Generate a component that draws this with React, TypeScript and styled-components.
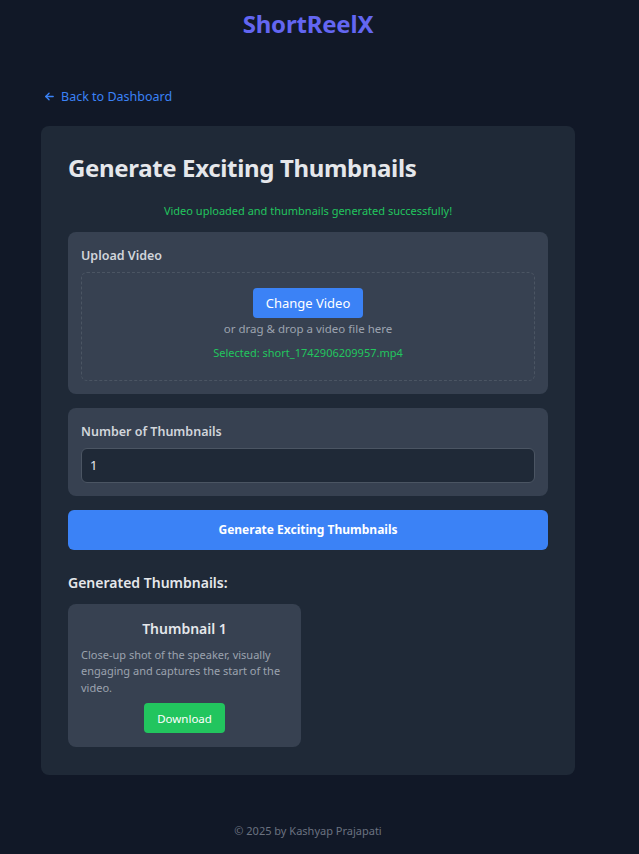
import React from "react";
import styled, { createGlobalStyle } from "styled-components";

const Global = createGlobalStyle`
  html, body { margin: 0; padding: 0; background: #111827; }
  body { font-family: "Noto Sans", "Open Sans", sans-serif; color: #e5e7eb; }
  * { box-sizing: border-box; }
`;

const Page = styled.div`
  width: 616px;
  min-height: 854px;
  background: #111827;
  display: flex;
  flex-direction: column;
`;

const Header = styled.header`
  display: flex;
  justify-content: center;
  padding-top: 8px;
  height: 52px;
`;

const Brand = styled.h1`
  margin: 0;
  font-size: 24px;
  line-height: 32px;
  font-weight: 700;
  color: #6366f1;
  letter-spacing: -0.2px;
`;

const Main = styled.main`
  padding: 33px 41px 0 41px;
  flex: 1;
`;

const BackLink = styled.a`
  display: inline-flex;
  align-items: center;
  gap: 6px;
  color: #3b82f6;
  font-size: 12.5px;
  line-height: 20px;
  text-decoration: none;
  margin-left: 3px;
  margin-bottom: 19px;
`;

const Card = styled.section`
  width: 534px;
  background: #1f2937;
  border-radius: 8px;
  padding: 27px 27px 28px 27px;
  display: flex;
  flex-direction: column;
`;

const Title = styled.h2`
  margin: 0;
  font-size: 24px;
  line-height: 30px;
  font-weight: 700;
  letter-spacing: -0.35px;
  color: #e5e7eb;
`;

const Success = styled.p`
  margin: 20px 0 13px;
  text-align: center;
  font-size: 11px;
  line-height: 16px;
  color: #22c55e;
`;

const Panel = styled.div`
  background: #374151;
  border-radius: 8px;
  padding: 14px 13px 13px;
  margin-bottom: 14px;
`;

const Label = styled.div`
  font-size: 12.5px;
  font-weight: 600;
  line-height: 20px;
  color: #d1d5db;
  margin-bottom: 6px;
`;

const Drop = styled.div`
  border: 1px dashed #4b5563;
  border-radius: 6px;
  height: 109px;
  display: flex;
  flex-direction: column;
  align-items: center;
  padding-top: 15px;
`;

const Button = styled.button<{ $tone: "blue" | "green"; $small?: boolean }>`
  border: none;
  cursor: pointer;
  font-family: inherit;
  color: #fff;
  background: ${(p) => (p.$tone === "blue" ? "#3b82f6" : "#22c55e")};
  border-radius: 4px;
  font-size: ${(p) => (p.$small ? "11.5px" : "13px")};
  padding: 0 13px;
  height: 30px;
`;

const Hint = styled.div<{ $green?: boolean }>`
  font-size: ${(p) => (p.$green ? "11px" : "11.5px")};
  line-height: 16px;
  color: ${(p) => (p.$green ? "#22c55e" : "#9ca3af")};
  margin-top: ${(p) => (p.$green ? "8px" : "3px")};
`;

const Input = styled.input`
  width: 100%;
  height: 35px;
  background: #1f2937;
  border: 1px solid #4b5563;
  border-radius: 6px;
  color: #e5e7eb;
  font-family: inherit;
  font-size: 13px;
  padding: 0 8px;
  outline: none;
`;

const Primary = styled.button`
  width: 100%;
  height: 40px;
  border: none;
  border-radius: 6px;
  background: #3b82f6;
  color: #fff;
  font-family: inherit;
  font-weight: 700;
  font-size: 12px;
  cursor: pointer;
`;

const SubTitle = styled.h3`
  margin: 22px 0 10px;
  font-size: 14px;
  line-height: 22px;
  font-weight: 600;
  color: #e5e7eb;
`;

const ThumbCard = styled.div`
  width: 233px;
  background: #374151;
  border-radius: 8px;
  padding: 14px 13px 14px;
  display: flex;
  flex-direction: column;
  align-items: center;
`;

const ThumbTitle = styled.div`
  font-size: 14px;
  font-weight: 600;
  line-height: 22px;
  color: #e5e7eb;
  margin-bottom: 7px;
`;

const ThumbText = styled.p`
  margin: 0 0 7px;
  align-self: stretch;
  font-size: 11px;
  line-height: 16.5px;
  color: #9ca3af;
`;

const Footer = styled.footer`
  text-align: center;
  font-size: 11px;
  color: #6b7280;
  padding: 48px 0 16px;
`;

export default function App() {
  return (
    <Page>
      <Global />
      <Header>
        <Brand>ShortReelX</Brand>
      </Header>
      <Main>
        <BackLink href="#">
          <svg width="11" height="11" viewBox="0 0 24 24" fill="none" stroke="currentColor" strokeWidth="3" strokeLinecap="round" strokeLinejoin="round">
            <path d="M20 12H4" />
            <path d="M11 5l-7 7 7 7" />
          </svg>
          Back to Dashboard
        </BackLink>
        <Card>
          <Title>Generate Exciting Thumbnails</Title>
          <Success>Video uploaded and thumbnails generated successfully!</Success>
          <Panel>
            <Label>Upload Video</Label>
            <Drop>
              <Button $tone="blue">Change Video</Button>
              <Hint>or drag &amp; drop a video file here</Hint>
              <Hint $green>Selected: short_1742906209957.mp4</Hint>
            </Drop>
          </Panel>
          <Panel>
            <Label>Number of Thumbnails</Label>
            <Input type="number" defaultValue="1" />
          </Panel>
          <Primary>Generate Exciting Thumbnails</Primary>
          <SubTitle>Generated Thumbnails:</SubTitle>
          <ThumbCard>
            <ThumbTitle>Thumbnail 1</ThumbTitle>
            <ThumbText>Close-up shot of the speaker, visually engaging and captures the start of the video.</ThumbText>
            <Button $tone="green" $small>Download</Button>
          </ThumbCard>
        </Card>
      </Main>
      <Footer>© 2025 by Kashyap Prajapati</Footer>
    </Page>
  );
}
